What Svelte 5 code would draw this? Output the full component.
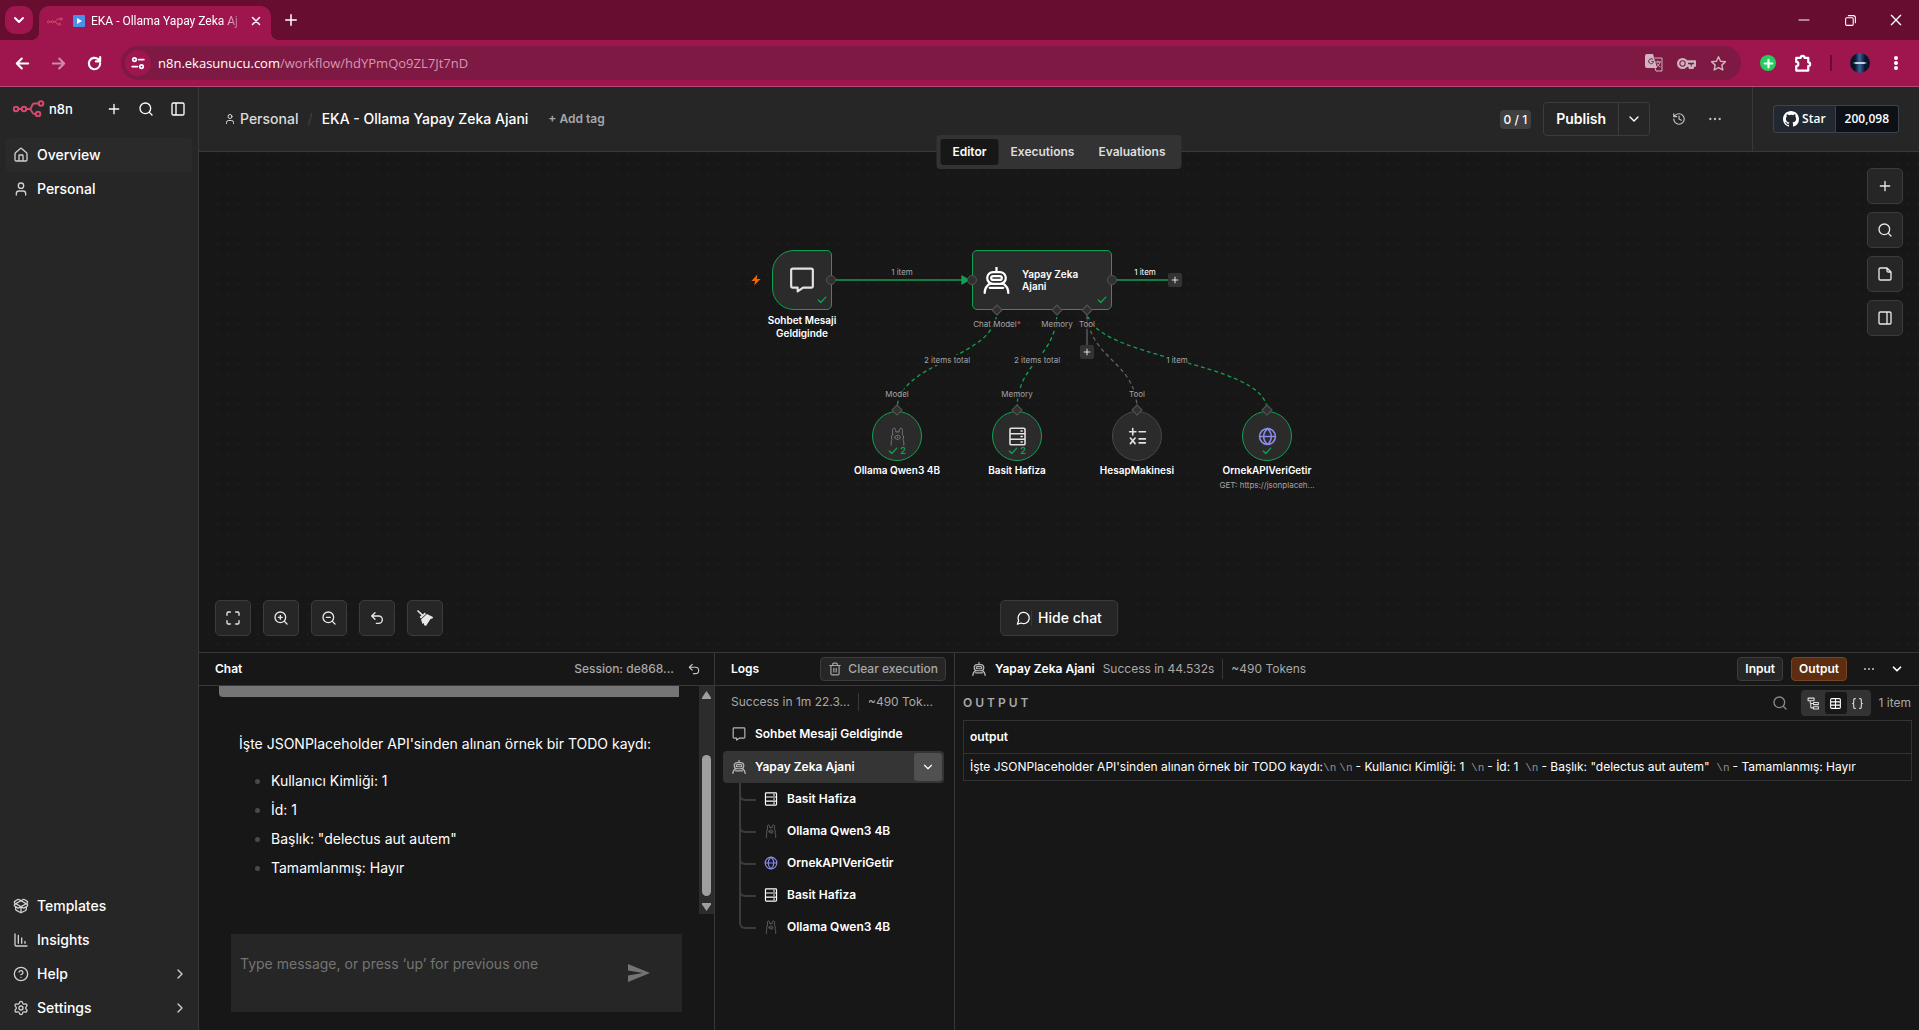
<script lang="ts">
	const circle = (x: number, y: number, r: number) =>
		`M${x + r} ${y}a${r} ${r} 0 1 1-${2 * r} 0a${r} ${r} 0 0 1 ${2 * r} 0z`;
	const box = 'M5 3h14a2 2 0 0 1 2 2v14a2 2 0 0 1-2 2H5a2 2 0 0 1-2-2V5a2 2 0 0 1 2-2z';
	const lens = circle(11, 11, 8) + 'M21 21l-4.3-4.3';

	const icons: Record<string, string> = {
		plus: 'M5 12h14M12 5v14',
		search: lens,
		panelLeft: box + 'M9 3v18',
		panelRight: box + 'M15 3v18',
		house:
			'M15 21v-8a1 1 0 0 0-1-1h-4a1 1 0 0 0-1 1v8M3 10a2 2 0 0 1 .7-1.5l7-6a2 2 0 0 1 2.6 0l7 6A2 2 0 0 1 21 10v9a2 2 0 0 1-2 2H5a2 2 0 0 1-2-2z',
		user: 'M19 21v-2a4 4 0 0 0-4-4H9a4 4 0 0 0-4 4v2' + circle(12, 7, 4),
		templates:
			'M12 22v-9M15.17 2.21a1.67 1.67 0 0 1 1.63 0L21 4.57a1.93 1.93 0 0 1 0 3.36L8.82 14.79a1.655 1.655 0 0 1-1.64 0L3 12.43a1.93 1.93 0 0 1 0-3.36zM20 13v3.87a2.06 2.06 0 0 1-1.11 1.83l-6 3.08a1.93 1.93 0 0 1-1.78 0l-6-3.08A2.06 2.06 0 0 1 4 16.87V13M21 12.43a1.93 1.93 0 0 0 0-3.36L8.83 2.2a1.64 1.64 0 0 0-1.63 0L3 4.57a1.93 1.93 0 0 0 0 3.36l12.18 6.86a1.636 1.636 0 0 0 1.63 0z',
		insights: 'M13 17V9M18 17v-3M3 3v16a2 2 0 0 0 2 2h16M8 17V5',
		help: circle(12, 12, 10) + 'M9.09 9a3 3 0 0 1 5.83 1c0 2-3 3-3 3M12 17h.01',
		settings:
			'M9.671 4.136a2.34 2.34 0 0 1 4.659 0 2.34 2.34 0 0 0 3.319 1.915 2.34 2.34 0 0 1 2.33 4.033 2.34 2.34 0 0 0 0 3.831 2.34 2.34 0 0 1-2.33 4.033 2.34 2.34 0 0 0-3.319 1.915 2.34 2.34 0 0 1-4.659 0 2.34 2.34 0 0 0-3.32-1.915 2.34 2.34 0 0 1-2.33-4.033 2.34 2.34 0 0 0 0-3.831A2.34 2.34 0 0 1 6.35 6.051a2.34 2.34 0 0 0 3.319-1.915' +
			circle(12, 12, 3),
		right: 'm9 18 6-6-6-6',
		down: 'm6 9 6 6 6-6',
		history: 'M3 12a9 9 0 1 0 9-9 9.75 9.75 0 0 0-6.74 2.74L3 8M3 3v5h5M12 7v5l4 2',
		note: 'M15 3H5a2 2 0 0 0-2 2v14a2 2 0 0 0 2 2h14a2 2 0 0 0 2-2V9zM15 3v4a2 2 0 0 0 2 2h4',
		fit: 'M8 3H5a2 2 0 0 0-2 2v3M21 8V5a2 2 0 0 0-2-2h-3M3 16v3a2 2 0 0 0 2 2h3M16 21h3a2 2 0 0 0 2-2v-3',
		zoomIn: lens + 'M11 8v6M8 11h6',
		zoomOut: lens + 'M8 11h6',
		undo: 'M9 14 4 9l5-5M4 9h10.5a5.5 5.5 0 0 1 0 11H11',
		chat: 'M7.9 20A9 9 0 1 0 4 16.1L2 22Z',
		trash:
			'M3 6h18M19 6v14a2 2 0 0 1-2 2H7a2 2 0 0 1-2-2V6M8 6V4a2 2 0 0 1 2-2h4a2 2 0 0 1 2 2v2M10 11v6M14 11v6',
		check: 'M21 5 9 18l-6-6',
		message: 'M3.500 1.500h17a1.500 1.500 0 0 1 1.500 1.500v14.500a1.500 1.500 0 0 1-1.500 1.500H13l-5 3.500V19H3.500A1.500 1.500 0 0 1 2 17.500V3a1.500 1.500 0 0 1 1.500-1.500z',
		robot:
			'M12 .5v4M9 4.500h6a5 5 0 0 1 0 10.500H9A5 5 0 0 1 9 4.500zM9 8h6a1.700 1.700 0 0 1 0 3.500H9A1.700 1.700 0 0 1 9 8zM1.500 23c0-4 1.800-6.500 5-8.500M22.500 23c0-4-1.800-6.500-5-8.500M6 18.500h12',
		llama:
			'M4 23v-3c0-2 .5-3 1.200-4C4 14 4 11 6 9.500M6 9.500C5.500 6 5.500 1.500 7.500 1.500S10 4 10 6.500c1.300-.6 2.700-.6 4 0C14 4 14.500 1.500 16.500 1.500S18.500 6 18 9.500c2 1.500 2 4.500.8 6.500.7 1 1.200 2 1.200 4v3M8.500 13c0-3.500 7-3.500 7 0s-7 3.500-7 0M12 12.500v1',
		memory:
			'M4 1.500h16a1.500 1.500 0 0 1 1.500 1.500v18a1.500 1.500 0 0 1-1.500 1.500H4A1.500 1.500 0 0 1 2.500 21V3A1.500 1.500 0 0 1 4 1.500zM2.500 8.500h19M2.500 15.500h19M16.500 5h1.500M16.500 12h1.500M16.500 19h1.500',
		calc: 'M6 2v8M2 6h8M14 6h8M3 14l6 7M9 14l-6 7M14 15h8M14 20h8',
		globe: circle(12, 12, 10) + 'M12 2c-6.500 6-6.500 14 0 20c6.500-6 6.500-14 0-20M2 12h20',
		table: box + 'M12 3v18M3 9h18M3 15h18',
		schema: 'M2 2h11v5H2zM12 10h9v4h-9zM12 18h9v4h-9zM6 7v4a1 1 0 0 0 1 1h5M7 12v7a1 1 0 0 0 1 1h4',
		json: 'M8 3H7a2 2 0 0 0-2 2v5a2 2 0 0 1-2 2 2 2 0 0 1 2 2v5a2 2 0 0 0 2 2h1M16 21h1a2 2 0 0 0 2-2v-5a2 2 0 0 1 2-2 2 2 0 0 1-2-2V5a2 2 0 0 0-2-2h-1',
		back: 'M20 12H4M11 5l-7 7 7 7',
		forward: 'M4 12h16M13 5l7 7-7 7',
		reload: 'M20 12a8 8 0 1 1-2.500-5.800L20 9M20 3v6h-6',
		sliders: circle(6, 6, 3) + 'M13 6h9' + circle(18, 18, 3) + 'M2 18h9',
		star: 'M12 2.500l2.900 6.300 6.900.8-5.100 4.700 1.400 6.800-6.100-3.400-6.100 3.400 1.400-6.800-5.100-4.700 6.900-.8z',
		key: circle(7, 12, 5.5) + circle(7, 12, 1.2) + 'M12 9.500h11v5h-3v3h-4v-3h-4',
		puzzle: 'M3 5h6a2.500 2.500 0 0 1 5 0h5v6a2.500 2.500 0 0 1 0 5v6H3v-6a2.700 2.700 0 0 0 0-5.500z',
		close: 'M5 5l14 14M19 5L5 19',
		restore: 'M5 7h10a2 2 0 0 1 2 2v10a2 2 0 0 1-2 2H5a2 2 0 0 1-2-2V9a2 2 0 0 1 2-2zM8 3h9a4 4 0 0 1 4 4v9'
	};

	const mainLinks = [
		{ icon: 'house', label: 'Overview', active: true },
		{ icon: 'user', label: 'Personal', active: false }
	];
	const bottomLinks = [
		{ icon: 'templates', label: 'Templates', more: false },
		{ icon: 'insights', label: 'Insights', more: false },
		{ icon: 'help', label: 'Help', more: true },
		{ icon: 'settings', label: 'Settings', more: true }
	];
	const tabs = ['Editor', 'Executions', 'Evaluations'];
	const canvasTools = [
		{ icon: 'plus', label: 'Add node' },
		{ icon: 'search', label: 'Search nodes' },
		{ icon: 'note', label: 'Add sticky note' },
		{ icon: 'panelRight', label: 'Toggle panel' }
	];
	const zoomTools = [
		{ icon: 'fit', label: 'Fit view' },
		{ icon: 'zoomIn', label: 'Zoom in' },
		{ icon: 'zoomOut', label: 'Zoom out' },
		{ icon: 'undo', label: 'Reset zoom' }
	];

	// positions on the canvas, measured to the centre of each node
	const subNodes = [
		{ x: 698, icon: 'llama', name: 'Ollama Qwen3 4B', port: 'Model', runs: '2', done: true, note: '' },
		{ x: 818, icon: 'memory', name: 'Basit Hafiza', port: 'Memory', runs: '2', done: true, note: '' },
		{ x: 938, icon: 'calc', name: 'HesapMakinesi', port: 'Tool', runs: '', done: false, note: '' },
		{ x: 1068, icon: 'globe', name: 'OrnekAPIVeriGetir', port: '', runs: '', done: true, note: 'GET: https://jsonplaceh...' }
	];
	const subEdges = [
		{ from: 798, to: 698, done: true, label: '2 items total' },
		{ from: 858, to: 818, done: true, label: '2 items total' },
		{ from: 888, to: 938, done: false, label: '' },
		{ from: 888, to: 1068, done: true, label: '1 item' }
	];
	const ports = [
		{ x: 798, label: 'Chat Model', required: true },
		{ x: 858, label: 'Memory', required: false },
		{ x: 888, label: 'Tool', required: false }
	];

	const todo = ['Kullanıcı Kimliği: 1', 'İd: 1', 'Başlık: "delectus aut autem"', 'Tamamlanmış: Hayır'];
	const logTree = [
		{ icon: 'memory', name: 'Basit Hafiza' },
		{ icon: 'llama', name: 'Ollama Qwen3 4B' },
		{ icon: 'globe', name: 'OrnekAPIVeriGetir' },
		{ icon: 'memory', name: 'Basit Hafiza' },
		{ icon: 'llama', name: 'Ollama Qwen3 4B' }
	];

	let tab = $state('Editor');
	let message = $state('');
	let expanded = $state(true);
</script>

{#snippet icon(name: string, size = 16, width = 2)}
	<svg class="icon {name}" width={size} height={size} viewBox="0 0 24 24" stroke-width={width} aria-hidden="true">
		<path d={icons[name]} />
	</svg>
{/snippet}

{#snippet dots(size = 16)}
	<svg class="solid" width={size} height={size} viewBox="0 0 24 24" aria-hidden="true">
		<circle cx="4" cy="12" r="2" /><circle cx="12" cy="12" r="2" /><circle cx="20" cy="12" r="2" />
	</svg>
{/snippet}

{#snippet logo(w: number)}
	<svg class="logo" width={w} height={w / 2 + 1} viewBox="0 0 32 17" aria-hidden="true">
		<circle cx="3" cy="9" r="2.300" /><circle cx="11" cy="9" r="2.300" />
		<circle cx="28" cy="3.500" r="2.300" /><circle cx="25" cy="14" r="2.300" />
		<path d="M5.300 9h3.400M13.300 9h3c3 0 2-5.500 5-5.500h4.400M16.300 9c3 0 2 5 5 5h1.400" />
	</svg>
{/snippet}

<div class="window">
	<div class="tabstrip">
		<button class="tab-list" aria-label="Search tabs">{@render icon('down', 16, 3)}</button>
		<div class="browser-tab">
			{@render logo(16)}
			<svg class="play" width="12" height="12" viewBox="0 0 12 12"><rect width="12" height="12" rx="1" /><path d="M4 3l5 3-5 3z" /></svg>
			<span>EKA - Ollama Yapay Zeka Aj</span>
			<button aria-label="Close tab">{@render icon('close', 12, 3)}</button>
		</div>
		<button class="new-tab" aria-label="New tab">{@render icon('plus', 18, 2)}</button>
		<div class="win-buttons">
			<button aria-label="Minimize"><svg class="icon" width="12" height="12" viewBox="0 0 12 12"><path d="M1 6h10" /></svg></button>
			<button aria-label="Restore">{@render icon('restore', 13, 2)}</button>
			<button aria-label="Close">{@render icon('close', 16, 2)}</button>
		</div>
	</div>
	<div class="toolbar">
		<button aria-label="Back">{@render icon('back', 17, 3)}</button>
		<button aria-label="Forward" class="faded">{@render icon('forward', 17, 3)}</button>
		<button aria-label="Reload">{@render icon('reload', 17, 3)}</button>
		<div class="address">
			<span class="site">{@render icon('sliders', 14, 3)}</span>
			<span class="url"><b>n8n.ekasunucu.com</b>/workflow/hdYPmQo9ZL7Jt7nD</span>
			<button aria-label="Translate">
				<svg width="18" height="18" viewBox="0 0 18 18" aria-hidden="true">
					<path class="page" d="M2 0h6l4 14H2a2 2 0 0 1-2-2V2a2 2 0 0 1 2-2z" />
					<path class="g" d="M8 5.500a2.500 2.500 0 1 0 .7 2H6.500" />
					<path class="back-page" d="M9.500 4H17v13h-6l-1-3M10 8h6M13 6.500V8M15 8c-.7 2.500-2 4-4 5M12 9.500c.5 1.500 1.800 2.800 3.500 3.500" />
				</svg>
			</button>
			<button aria-label="Passwords">{@render icon('key', 19, 3)}</button>
			<button aria-label="Bookmark">{@render icon('star', 17, 2)}</button>
		</div>
		<div class="extensions">
			<button class="green" aria-label="Extension">{@render icon('plus', 13, 4)}</button>
			<button aria-label="Extensions">{@render icon('puzzle', 18, 3)}</button>
			<span class="bar"></span>
			<span class="avatar"></span>
			<button aria-label="Menu">
				<svg class="solid" width="16" height="16" viewBox="0 0 16 16"><circle cx="8" cy="3" r="2" /><circle cx="8" cy="8" r="2" /><circle cx="8" cy="13" r="2" /></svg>
			</button>
		</div>
	</div>

	<div class="app">
		<aside>
			<div class="brand">
				{@render logo(32)}
				<span>n8n</span>
				<button aria-label="Create">{@render icon('plus', 16)}</button>
				<button aria-label="Search">{@render icon('search', 16)}</button>
				<button aria-label="Collapse sidebar">{@render icon('panelLeft', 16)}</button>
			</div>
			<nav>
				{#each mainLinks as link}
					<a href="#{link.label}" class:active={link.active}>{@render icon(link.icon)}<span>{link.label}</span></a>
				{/each}
			</nav>
			<nav class="bottom-nav">
				{#each bottomLinks as link}
					<a href="#{link.label}">
						{@render icon(link.icon)}<span>{link.label}</span>
						{#if link.more}{@render icon('right')}{/if}
					</a>
				{/each}
			</nav>
		</aside>

		<main>
			<header>
				<div class="crumbs">
					<a href="#project">{@render icon('user', 12)}Personal</a>
					<span class="slash">/</span>
					<h1>EKA - Ollama Yapay Zeka Ajani</h1>
					<button>+ Add tag</button>
				</div>
				<div class="actions">
					<span class="count">0 / 1</span>
					<div class="publish">
						<button>Publish</button>
						<button aria-label="Publish options">{@render icon('down', 16)}</button>
					</div>
					<button class="plain" aria-label="History">{@render icon('history', 14)}</button>
					<button class="plain" aria-label="More">{@render dots(14)}</button>
				</div>
				<div class="github">
					<a href="#star">
						<svg width="16" height="16" viewBox="0 0 16 16" aria-hidden="true">
							<path d="M8 0C3.580 0 0 3.580 0 8c0 3.540 2.290 6.530 5.470 7.590.4.070.55-.17.55-.38 0-.19-.01-.82-.01-1.490-2.010.37-2.530-.49-2.690-.94-.09-.23-.48-.94-.82-1.130-.28-.15-.68-.52-.01-.53.63-.01 1.080.58 1.230.82.72 1.210 1.870.87 2.330.66.07-.52.28-.87.51-1.070-1.780-.2-3.640-.89-3.640-3.950 0-.87.31-1.590.82-2.150-.08-.2-.36-1.020.08-2.120 0 0 .67-.21 2.200.82a7.600 7.600 0 0 1 4 0c1.530-1.040 2.200-.82 2.200-.82.44 1.100.16 1.920.08 2.120.51.56.82 1.270.82 2.150 0 3.070-1.870 3.750-3.650 3.950.29.25.54.73.54 1.480 0 1.070-.01 1.930-.01 2.200 0 .21.15.46.55.38A8 8 0 0 0 16 8c0-4.420-3.580-8-8-8z" />
						</svg>
						Star
					</a>
					<a href="#stars">200,098</a>
				</div>
				<div class="tabs">
					{#each tabs as name}
						<button class:active={tab === name} onclick={() => (tab = name)}>{name}</button>
					{/each}
				</div>
			</header>

			<section class="canvas">
				<svg class="edges" aria-hidden="true">
					<path class="done" d="M633 128H765" />
					<path class="arrow" d="M763 124l7 4-7 4z" />
					<path class="done" d="M913 128h57" />
					{#each subEdges as edge}
						<path
							class:done={edge.done}
							class="dashed"
							d="M{edge.from} 158C{edge.from} 208 {edge.to} 208 {edge.to} 258"
						/>
					{/each}
					<path d="M888 158v36" />
				</svg>
				<span class="edge-label" style:left="703px" style:top="120px">1 item</span>
				<span class="edge-label bright" style:left="946px" style:top="120px">1 item</span>
				{#each subEdges as edge}
					{#if edge.label}
						<span class="edge-label" style:left="{(edge.from + edge.to) / 2}px" style:top="208px">{edge.label}</span>
					{/if}
				{/each}

				<div class="node trigger" style:left="603px" style:top="128px">
					{@render icon('message', 26)}
					<span class="status">{@render icon('check', 10, 3)}</span>
				</div>
				<span class="bolt" style:left="557px" style:top="128px">
					<svg width="11" height="11" viewBox="0 0 12 12"><path d="M7.500 0 1 7h4l-1 5 7-7H7z" /></svg>
				</span>
				<div class="node-name" style:left="603px" style:top="162px">Sohbet Mesaji Geldiginde</div>

				<div class="node agent" style:left="843px" style:top="128px">
					{@render icon('robot', 27)}
					<span>Yapay Zeka Ajani</span>
					<span class="status">{@render icon('check', 10, 3)}</span>
				</div>

				{#each [632, 773, 913] as x}
					<span class="dot" style:left="{x}px" style:top="128px"></span>
				{/each}
				{#each ports as port}
					<span class="diamond" style:left="{port.x}px" style:top="158px"></span>
					<span class="port" style:left="{port.x}px" style:top="172px">{port.label}{#if port.required}<i>*</i>{/if}</span>
				{/each}
				<button class="add" aria-label="Add tool" style:left="888px" style:top="200px">{@render icon('plus', 10)}</button>
				<button class="add" aria-label="Add next node" style:left="976px" style:top="128px">{@render icon('plus', 10)}</button>

				{#each subNodes as node}
					<div class="node round" class:idle={!node.done} style:left="{node.x}px" style:top="284px">
						{@render icon(node.icon, 19, node.icon === 'llama' ? 1 : 2)}
						{#if node.done}
							<span class="status">{@render icon('check', 10, 3)}{node.runs}</span>
						{/if}
					</div>
					<span class="diamond" style:left="{node.x}px" style:top="258px"></span>
					{#if node.port}
						<span class="port" style:left="{node.x}px" style:top="242px">{node.port}</span>
					{/if}
					<div class="node-name" style:left="{node.x}px" style:top="312px">
						{node.name}
						{#if node.note}<small>{node.note}</small>{/if}
					</div>
				{/each}

				<div class="side-tools">
					{#each canvasTools as tool}
						<button class="tool" aria-label={tool.label}>{@render icon(tool.icon)}</button>
					{/each}
				</div>
				<div class="zoom-tools">
					{#each zoomTools as tool}
						<button class="tool" aria-label={tool.label}>{@render icon(tool.icon)}</button>
					{/each}
					<button class="tool" aria-label="Tidy up">
						<svg class="solid" width="16" height="16" viewBox="0 0 16 16"><path d="M0 1l1-1 5 4.500 1.500-2L9 4l-5 4.500-1.500-1.500 2-1.500zM10 4 16 7l-.5 1.500-2 .5L9 16l-2-1v-2l-1.500 1L4 9.500z" /></svg>
					</button>
				</div>
				<button class="tool hide-chat">{@render icon('chat')}Hide chat</button>
			</section>

			<div class="panels">
				<section class="chat">
					<div class="panel-head">
						<h2>Chat</h2>
						<span class="muted">Session: de868...</span>
						<button class="plain" aria-label="Reset session">{@render icon('undo', 14)}</button>
					</div>
					<div class="chat-log">
						<div class="messages">
							<div class="sent"></div>
							<div class="reply">
								<p>İşte JSONPlaceholder API'sinden alınan örnek bir TODO kaydı:</p>
								<ul>
									{#each todo as line}
										<li>{line}</li>
									{/each}
								</ul>
							</div>
						</div>
						<div class="scrollbar">
							<svg class="solid" width="9" height="8" viewBox="0 0 9 8"><path d="M4.500 0 9 6.500V8H0V6.500z" /></svg>
							<span class="thumb"></span>
							<svg class="solid" width="9" height="8" viewBox="0 0 9 8"><path d="M4.500 8 9 1.500V0H0v1.500z" /></svg>
						</div>
					</div>
					<form class="composer">
						<textarea aria-label="Message" placeholder="Type message, or press ‘up’ for previous one" bind:value={message}></textarea>
						<button type="button" aria-label="Send">
							<svg class="solid" width="22" height="18" viewBox="0 0 22 18"><path d="M0 0l22 9L0 18v-6.500L15 9 0 6.500z" /></svg>
						</button>
					</form>
				</section>

				<section class="logs">
					<div class="panel-head">
						<h2>Logs</h2>
						<button class="small">{@render icon('trash', 14)}Clear execution</button>
					</div>
					<div class="summary muted"><span>Success in 1m 22.3...</span><span>~490 Tok...</span></div>
					<div class="log-row">{@render icon('message', 14)}Sohbet Mesaji Geldiginde</div>
					<div class="log-row selected">
						{@render icon('robot', 14)}Yapay Zeka Ajani
						<button aria-label="Toggle" onclick={() => (expanded = !expanded)}>{@render icon('down', 14)}</button>
					</div>
					{#if expanded}
						<ul class="tree">
							{#each logTree as item}
								<li>{@render icon(item.icon, 14, item.icon === 'llama' ? 1 : 2)}{item.name}</li>
							{/each}
						</ul>
					{/if}
				</section>

				<section class="details">
					<div class="panel-head">
						{@render icon('robot', 14)}
						<h2>Yapay Zeka Ajani</h2>
						<span class="muted">Success in 44.532s</span>
						<span class="muted tokens">~490 Tokens</span>
						<div class="toggles">
							<button class="small">Input</button>
							<button class="small on">Output</button>
							<button class="plain" aria-label="More">{@render dots(12)}</button>
							<button class="plain" aria-label="Collapse">{@render icon('down', 14, 3)}</button>
						</div>
					</div>
					<div class="output-head">
						<h3>OUTPUT</h3>
						<button class="plain" aria-label="Search output">{@render icon('search', 16)}</button>
						<div class="views">
							<button aria-label="Schema">{@render icon('schema', 13)}</button>
							<button aria-label="Table" class="active">{@render icon('table', 13)}</button>
							<button aria-label="JSON">{@render icon('json', 13)}</button>
						</div>
						<span class="muted">1 item</span>
					</div>
					<table>
						<thead><tr><th>output</th></tr></thead>
						<tbody>
							<tr>
								<td>İşte JSONPlaceholder API'sinden alınan örnek bir TODO kaydı:<i>\n</i><i>\n</i>- Kullanıcı Kimliği: 1&nbsp; <i>\n</i>- İd: 1&nbsp; <i>\n</i>- Başlık: "delectus aut autem"&nbsp; <i>\n</i>- Tamamlanmış: Hayır</td>
							</tr>
						</tbody>
					</table>
				</section>
			</div>
		</main>
	</div>
</div>

<style>
	:global(body) {
		background: #171717;
	}
	.window {
		height: 100vh;
		display: flex;
		flex-direction: column;
		overflow: hidden;
		color: #fff;
		font: 500 14px/20px Inter, sans-serif;
	}
	.window * {
		box-sizing: border-box;
	}
	button {
		background: none;
		border: none;
		padding: 0;
		color: inherit;
		font: inherit;
		display: flex;
		align-items: center;
		justify-content: center;
	}
	a {
		color: inherit;
		text-decoration: none;
	}
	h1,
	h2,
	h3,
	p,
	ul {
		margin: 0;
		padding: 0;
		list-style: none;
		font-size: inherit;
		font-weight: inherit;
	}
	svg {
		flex: none;
		display: block;
	}
	.icon,
	.logo {
		fill: none;
		stroke: currentColor;
		stroke-linecap: round;
		stroke-linejoin: round;
	}
	.logo {
		stroke: #d8476e;
		stroke-width: 2;
	}
	.solid {
		fill: currentColor;
	}
	.icon.globe {
		color: #8a8ae8;
	}
	.icon.llama {
		color: #8c8c94;
	}

	/* browser */
	.tabstrip {
		height: 40px;
		background: #670d30;
		display: flex;
		align-items: center;
		padding-left: 5px;
	}
	.tab-list {
		width: 28px;
		height: 28px;
		border-radius: 10px;
		background: #9f154e;
	}
	.browser-tab {
		position: relative;
		width: 232px;
		height: 34px;
		margin-left: 6px;
		align-self: flex-end;
		display: flex;
		align-items: center;
		gap: 6px;
		padding: 0 10px 4px 8px;
		background: #9f154e;
		border-radius: 10px 10px 0 0;
	}
	.browser-tab::before,
	.browser-tab::after {
		content: '';
		position: absolute;
		bottom: 0;
		right: 100%;
		width: 8px;
		height: 8px;
		background: radial-gradient(circle at 0 0, #670d30 8px, #9f154e 8px);
	}
	.browser-tab::after {
		right: auto;
		left: 100%;
		background: radial-gradient(circle at 100% 0, #670d30 8px, #9f154e 8px);
	}
	.browser-tab .logo {
		margin-right: 4px;
	}
	.browser-tab span {
		flex: 1;
		white-space: nowrap;
		font: 12px/20px Roboto, sans-serif;
		mask-image: linear-gradient(90deg, #000 88%, #0005);
	}
	.browser-tab button {
		margin-left: 6px;
	}
	.play rect {
		fill: #4a8fe8;
	}
	.play path {
		fill: #fff;
	}
	.new-tab {
		margin-left: 11px;
	}
	.win-buttons {
		margin-left: auto;
		display: flex;
	}
	.win-buttons button {
		width: 46px;
		height: 40px;
	}
	.toolbar {
		height: 47px;
		background: #9f154e;
		border-bottom: 1px solid #b5487a;
		display: flex;
		align-items: center;
		padding: 0 15px 0 14px;
		gap: 19px;
	}
	.faded {
		opacity: 0.5;
	}
	.address {
		flex: 1;
		height: 34px;
		border-radius: 17px;
		background: #7d1942;
		margin-left: -1px;
		padding: 0 14px 0 4px;
		display: flex;
		align-items: center;
		gap: 14px;
		color: #d0b4c0;
	}
	.site {
		width: 26px;
		height: 26px;
		border-radius: 50%;
		background: #9f154e;
		color: #fff;
		display: grid;
		place-items: center;
	}
	.url {
		flex: 1;
		margin-left: -7px;
		font: 13px/20px "Open Sans", sans-serif;
		color: #d896b2;
	}
	.url b {
		font-weight: 400;
		color: #fff;
	}
	.page {
		fill: #d0b4c0;
	}
	.g,
	.back-page {
		fill: none;
		stroke: #7d1942;
	}
	.back-page {
		stroke: #d0b4c0;
	}
	.extensions {
		display: flex;
		align-items: center;
		gap: 18px;
	}
	.green {
		width: 16px;
		height: 16px;
		border-radius: 50%;
		background: #23cf5f;
	}
	.bar {
		width: 2px;
		height: 16px;
		background: #670d30;
	}
	.avatar {
		width: 20px;
		height: 20px;
		border-radius: 50%;
		background:
			linear-gradient(90deg, #0000 15%, #c8d4e6 30% 70%, #0000 85%) center / 100% 2px no-repeat,
			linear-gradient(90deg, #0a1428 25%, #38639c 48%, #0a1428 75%);
	}

	/* app */
	.app {
		flex: 1;
		min-height: 0;
		display: flex;
	}
	aside {
		width: 199px;
		flex: none;
		display: flex;
		flex-direction: column;
		background: #262626;
		border-right: 1px solid #383838;
	}
	.brand {
		display: flex;
		align-items: center;
		gap: 16px;
		padding: 0 12px 8px 13px;
		height: 51px;
	}
	.brand span {
		flex: 1;
		margin-left: -12px;
		font-size: 13px;
	}
	nav {
		padding: 0 6px;
		display: flex;
		flex-direction: column;
	}
	nav a {
		height: 34px;
		padding: 0 4px 0 7px;
		display: flex;
		align-items: center;
		gap: 8px;
		border-radius: 4px;
		color: #d0d0d0;
	}
	nav a span {
		flex: 1;
		color: #fff;
	}
	nav .active {
		background: #2a2a2a;
	}
	.bottom-nav {
		margin-top: auto;
		padding-bottom: 5px;
	}
	main {
		flex: 1;
		min-width: 0;
		display: flex;
		flex-direction: column;
	}
	header {
		position: relative;
		height: 65px;
		flex: none;
		background: #262626;
		border-bottom: 1px solid #3a3a3a;
		display: flex;
		align-items: center;
	}
	.crumbs {
		flex: 1;
		display: flex;
		align-items: center;
		gap: 9px;
		padding-left: 25px;
	}
	.crumbs a {
		display: flex;
		align-items: center;
		gap: 4px;
		color: #dcdcdc;
	}
	.slash {
		color: #3f3f3f;
	}
	.crumbs button {
		margin-left: 11px;
		color: #a8a8a8;
		font: 600 12px/20px Inter, sans-serif;
	}
	.actions {
		display: flex;
		align-items: center;
		padding-right: 19px;
	}
	.count {
		padding: 0 4px;
		margin-right: 12px;
		border-radius: 4px;
		background: #404040;
		font-size: 12px;
		line-height: 19px;
	}
	.publish {
		display: flex;
		margin-right: 11px;
		border: 1px solid #3c3c3c;
		border-radius: 4px;
	}
	.publish button {
		height: 32px;
		padding: 0 12px;
		font-weight: 600;
	}
	.publish button + button {
		padding: 0 7px;
		border-left: 1px solid #3c3c3c;
	}
	.actions .plain {
		width: 36px;
		height: 32px;
	}
	.plain {
		color: #c4c4c4;
	}
	.github {
		align-self: stretch;
		display: flex;
		align-items: center;
		padding: 0 20px;
		border-left: 1px solid #383838;
		font: 600 12px/26px "Open Sans", sans-serif;
	}
	.github a {
		display: flex;
		align-items: center;
		gap: 3px;
		padding: 0 9px;
		background: #212830;
		border: 1px solid #3d444d;
		border-radius: 3px 0 0 3px;
	}
	.github a + a {
		background: #0d1117;
		border-left: none;
		border-radius: 0 3px 3px 0;
	}
	.github svg {
		fill: #fff;
	}
	.tabs {
		position: absolute;
		z-index: 1;
		top: 48px;
		left: 50%;
		transform: translateX(-50%);
		display: flex;
		padding: 4px;
		border-radius: 4px;
		background: #333;
	}
	.tabs button {
		height: 26px;
		padding: 0 12px;
		border-radius: 3px;
		color: #dedede;
		font: 600 12px/20px Inter, sans-serif;
	}
	.tabs .active {
		background: #171717;
		color: #fff;
	}

	.canvas {
		position: relative;
		flex: 1;
		min-height: 0;
		overflow: hidden;
		background: radial-gradient(circle at 1px 1px, #1d1d1d 1px, transparent 1px) 8px 1px / 10px 10px;
	}
	.edges {
		position: absolute;
		inset: 0;
		width: 100%;
		height: 100%;
		fill: none;
		stroke: #626262;
		stroke-width: 1.3;
	}
	.edges .dashed {
		stroke-dasharray: 4 3;
	}
	.edges .done {
		stroke: #12a150;
	}
	.edges .arrow {
		fill: #12a150;
		stroke: #12a150;
	}
	.edge-label,
	.port,
	.node,
	.bolt,
	.dot,
	.diamond,
	.add {
		position: absolute;
		transform: translate(-50%, -50%);
	}
	.edge-label,
	.port {
		background: #171717b0;
		color: #a4a4a4;
		font: 400 8px/10px Inter, sans-serif;
		white-space: nowrap;
	}
	.edge-label {
		background: #171717;
	}
	.edge-label.bright {
		color: #fff;
	}
	.port i {
		color: #f04848;
		font-style: normal;
	}
	.node {
		display: flex;
		align-items: center;
		justify-content: center;
		border: 1px solid #12a150;
		background: #2b2b2b;
		color: #e2e2e2;
	}
	.trigger {
		width: 60px;
		height: 60px;
		border-radius: 22px 5px 5px 22px;
	}
	.agent {
		width: 140px;
		height: 60px;
		border-radius: 5px;
		justify-content: flex-start;
		gap: 12px;
		padding-left: 10px;
		color: #fff;
		font: 600 10px/12px Inter, sans-serif;
	}
	.agent span:not(.status) {
		width: 60px;
	}
	.round {
		width: 50px;
		height: 50px;
		border-radius: 50%;
	}
	.node.idle {
		border-color: #484848;
	}
	.status {
		position: absolute;
		right: 4px;
		bottom: 4px;
		display: flex;
		gap: 2px;
		color: #12a150;
		font: 600 9px/10px Inter, sans-serif;
	}
	.round .status {
		left: 0;
		right: 0;
		justify-content: center;
	}
	.bolt {
		fill: #e8670c;
	}
	.node-name {
		position: absolute;
		transform: translateX(-50%);
		width: 110px;
		padding: 0 15px;
		text-align: center;
		font: 600 10px/13px Inter, sans-serif;
		white-space: nowrap;
		display: flex;
		flex-direction: column;
		align-items: center;
	}
	.trigger ~ .bolt + .node-name {
		white-space: normal;
	}
	.node-name small {
		margin-top: 3px;
		color: #a4a4a4;
		font: 400 8px/10px Inter, sans-serif;
	}
	.dot,
	.diamond {
		width: 10px;
		height: 10px;
		border: 1px solid #555;
		border-radius: 50%;
		background: #303030;
	}
	.diamond {
		width: 8px;
		height: 8px;
		border-radius: 0;
		transform: translate(-50%, -50%) rotate(45deg);
	}
	.add {
		width: 14px;
		height: 14px;
		border-radius: 2px;
		background: #333;
	}
	.tool {
		width: 36px;
		height: 36px;
		gap: 8px;
		border: 1px solid #3c3c3c;
		border-radius: 5px;
		background: #262626;
		color: #e8e8e8;
	}
	.side-tools,
	.zoom-tools {
		position: absolute;
		top: 16px;
		right: 16px;
		display: grid;
		gap: 8px;
	}
	.zoom-tools {
		inset: auto auto 16px 16px;
		display: flex;
		gap: 12px;
	}
	.hide-chat {
		position: absolute;
		left: 50%;
		bottom: 16px;
		transform: translateX(-50%);
		width: auto;
		padding: 0 15px;
		gap: 6px;
		color: #fff;
	}

	/* bottom panels */
	.panels {
		height: 378px;
		flex: none;
		display: grid;
		grid-template-columns: 516px 240px 1fr;
		border-top: 1px solid #383838;
		font-size: 12px;
	}
	.panels > section {
		min-width: 0;
		display: flex;
		flex-direction: column;
	}
	.chat,
	.logs {
		border-right: 1px solid #383838;
	}
	.panel-head {
		height: 33px;
		flex: none;
		display: flex;
		align-items: center;
		border-bottom: 1px solid #383838;
		padding: 0 8px 0 16px;
	}
	.panel-head h2 {
		font-weight: 600;
	}
	.muted {
		color: #a8a8a8;
		font-weight: 400;
	}
	.chat .muted {
		margin-left: auto;
		font-weight: 500;
	}
	.chat .plain {
		margin: 0 5px 0 13px;
	}
	.chat-log {
		height: 228px;
		display: flex;
		font-size: 14px;
	}
	.messages {
		flex: 1;
		padding: 0 20px;
	}
	.sent {
		height: 11px;
		border-radius: 0 0 0 4px;
		background: #757575;
	}
	.reply {
		padding: 37px 20px;
		font-weight: 400;
	}
	.reply ul {
		display: grid;
		gap: 9px;
		margin-top: 17px;
	}
	.reply li {
		display: flex;
		align-items: center;
		gap: 11px;
		padding-left: 16px;
	}
	.reply li::before {
		content: '';
		width: 5px;
		height: 5px;
		border-radius: 50%;
		background: #4a4a4a;
	}
	.scrollbar {
		width: 15px;
		padding: 5px 0 3px;
		display: flex;
		flex-direction: column;
		align-items: center;
		background: #2c2c2c;
		color: #9f9f9f;
	}
	.thumb {
		width: 9px;
		height: 141px;
		margin: auto 0 7px;
		border-radius: 5px;
		background: #9f9f9f;
	}
	.composer {
		height: 78px;
		margin: 20px 32px 0;
		padding: 20px 32px 0 9px;
		display: flex;
		align-items: flex-start;
		background: #262626;
		color: #747474;
	}
	textarea {
		flex: 1;
		height: 40px;
		padding: 0;
		border: none;
		outline: none;
		resize: none;
		background: none;
		color: #fff;
		font: 400 14px/20px Inter, sans-serif;
	}
	textarea::placeholder {
		color: #747474;
	}
	.composer button {
		margin-top: 10px;
	}

	.small {
		height: 24px;
		padding: 0 7px;
		gap: 6px;
		border: 1px solid #3c3c3c;
		border-radius: 4px;
		background: #262626;
		font-weight: 600;
	}
	.logs .small {
		margin-left: auto;
		color: #a8a8a8;
		font-weight: 500;
	}
	.summary {
		display: flex;
		padding: 7px 16px 7px;
		line-height: 18px;
	}
	.summary span + span,
	.tokens {
		margin-left: 8px;
		padding-left: 9px;
		border-left: 1px solid #383838;
	}
	.log-row {
		height: 32px;
		margin: 0 10px 0 8px;
		padding: 0 2px 0 9px;
		display: flex;
		align-items: center;
		gap: 9px;
		font-weight: 600;
		border-radius: 4px;
	}
	.log-row .icon {
		color: #b8b8b8;
	}
	.selected {
		margin-top: 1px;
		background: #353535;
	}
	.selected button {
		width: 28px;
		height: 28px;
		margin-left: auto;
		border-radius: 3px;
		background: #505050;
	}
	.selected button .icon {
		color: #fff;
	}
	.tree {
		margin-left: 24px;
	}
	.tree li {
		position: relative;
		height: 32px;
		padding-left: 25px;
		display: flex;
		align-items: center;
		gap: 9px;
		font-weight: 600;
	}
	.tree li::before,
	.tree li:not(:last-child)::after {
		content: '';
		position: absolute;
		left: 0;
		top: 0;
		width: 15px;
		height: 16px;
		border: 2px solid #3c3c3c;
		border-width: 0 0 2px 2px;
		border-bottom-left-radius: 6px;
	}
	.tree li:not(:last-child)::after {
		width: 0;
		height: 100%;
		border-width: 0 0 0 2px;
		border-radius: 0;
	}

	.details .panel-head {
		padding: 0 12px 0 17px;
		gap: 8px;
	}
	.details .panel-head > .icon {
		margin-right: 1px;
		color: #b8b8b8;
	}
	.details .tokens {
		margin-left: 0;
		padding-left: 8px;
	}
	.toggles {
		margin-left: auto;
		display: flex;
		align-items: center;
		gap: 8px;
	}
	.toggles .plain {
		width: 20px;
		margin-left: 4px;
	}
	.toggles .plain + .plain {
		margin-left: 0;
		color: #fff;
	}
	.small.on {
		background: #5c2d10;
		border-color: #7a4420;
	}
	.output-head {
		display: flex;
		align-items: center;
		gap: 8px;
		height: 34px;
		padding: 0 8px;
	}
	.output-head h3 {
		color: #a8a8a8;
		font-weight: 600;
		letter-spacing: 3px;
	}
	.output-head .plain {
		margin: 0 5px 0 auto;
		color: #8a8a8a;
	}
	.views {
		display: flex;
		padding: 2px;
		border-radius: 4px;
		background: #333;
	}
	.views button {
		width: 22px;
		height: 22px;
		border-radius: 3px;
		color: #dedede;
	}
	.views .active {
		background: #171717;
		color: #fff;
	}
	table {
		margin: 0 7px 0 8px;
		border-collapse: collapse;
	}
	th,
	td {
		border: 1px solid #333;
		padding: 6px;
		text-align: left;
		font-weight: 600;
	}
	td {
		padding: 3px 6px;
		font-weight: 400;
		white-space: nowrap;
	}
	td i {
		margin-right: 3px;
		color: #8f8f8f;
		font: 11px "Liberation Mono", monospace;
	}
</style>
